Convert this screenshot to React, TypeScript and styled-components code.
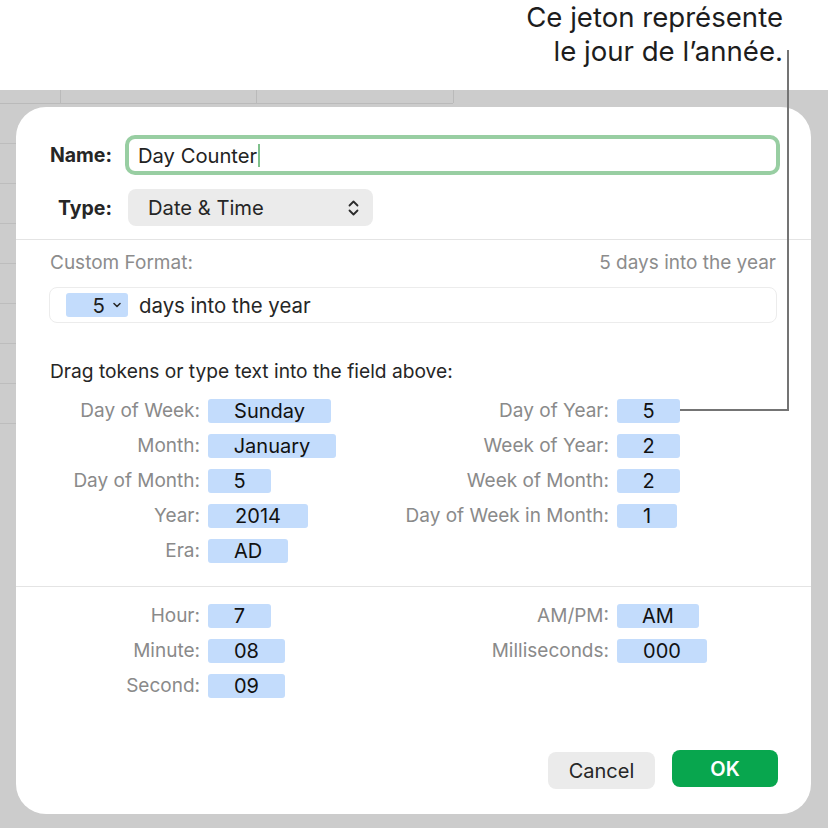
import React from "react";
import styled, { createGlobalStyle } from "styled-components";

const Global = createGlobalStyle`
  html, body { margin: 0; padding: 0; background: #ffffff; }
  body { font-family: Inter, "Noto Sans", "Liberation Sans", sans-serif; -webkit-font-smoothing: antialiased; }
  * { box-sizing: border-box; }
`;

const Page = styled.div`
  position: relative;
  width: 828px;
  height: 830px;
  background: #ffffff;
  overflow: hidden;
`;

const Header = styled.div`
  height: 90px;
  display: flex;
  flex-direction: column;
  align-items: flex-end;
  padding-right: 45px;
`;

const CalloutText = styled.div`
  font-size: 27.6px;
  line-height: 34px;
  color: #1d1d1d;
  text-align: right;
`;

const CalloutLine = styled.div`
  position: absolute;
  left: 680px;
  top: 50px;
  width: 109px;
  height: 361px;
  border-right: 2px solid #747474;
  border-bottom: 2px solid #747474;
  pointer-events: none;
`;

const Stage = styled.div`
  height: 738px;
  padding: 17px 0 0 16px;
  background-color: #cccccc;
  background-image:
    linear-gradient(#bababa, #bababa),
    linear-gradient(#bababa, #bababa),
    linear-gradient(#bababa, #bababa),
    linear-gradient(#bababa, #bababa),
    repeating-linear-gradient(to bottom, transparent 0 39px, #bdbdbd 39px 40px);
  background-size: 453px 1px, 1px 13px, 1px 13px, 1px 13px, 16px 334px;
  background-position: 0 13px, 60px 0, 256px 0, 453px 0, 0 14px;
  background-repeat: no-repeat;
`;

const Dialog = styled.div`
  width: 795px;
  height: 707px;
  background: #ffffff;
  border-radius: 30px;
  display: flex;
  flex-direction: column;
`;

const TopGrid = styled.div`
  display: grid;
  grid-template-columns: 96px 1fr;
  column-gap: 13px;
  row-gap: 14px;
  padding: 28px 31px 0 0;
  align-items: center;
`;

const BoldLabel = styled.div`
  font-size: 19.5px;
  font-weight: 700;
  color: #262626;
  text-align: right;
`;

const NameField = styled.div`
  height: 40px;
  border: 4px solid #98cea2;
  border-radius: 10px;
  display: flex;
  align-items: center;
  padding-left: 9px;
  font-size: 20.2px;
  color: #222;
`;

const Caret = styled.span`
  display: inline-block;
  width: 2px;
  height: 23px;
  background: #7fc18c;
  margin-left: 1px;
`;

const Popup = styled.div`
  margin-left: 3px;
  width: 245px;
  height: 37px;
  background: #ebebeb;
  border-radius: 8px;
  display: flex;
  align-items: center;
  justify-content: space-between;
  padding: 0 14px 0 20px;
  font-size: 20.2px;
  color: #262626;
`;

const Separator = styled.div<{ $top: number }>`
  height: 1px;
  background: #e4e4e4;
  margin-top: ${(p) => p.$top}px;
`;

const Section = styled.div<{ $top: number }>`
  padding: 0 34px 0 33px;
  margin-top: ${(p) => p.$top}px;
`;

const FormatHeader = styled.div`
  display: flex;
  justify-content: space-between;
  padding: 0 1px 0 1px;
  font-size: 19px;
  line-height: 24px;
  color: #8c8c8c;
`;

const FormatField = styled.div`
  margin-top: 12px;
  height: 36px;
  border: 1px solid #ececec;
  border-radius: 8px;
  display: flex;
  align-items: center;
  padding-left: 16px;
  gap: 11px;
  font-size: 20.4px;
  color: #262626;
`;

const MenuToken = styled.div`
  width: 62px;
  height: 24px;
  background: #c3dcfc;
  border-radius: 3px;
  display: flex;
  align-items: center;
  justify-content: flex-end;
  gap: 8px;
  padding-right: 7px;
  color: #1e1e1e;
`;

const Instruction = styled.div`
  margin-top: 36px;
  padding-left: 1px;
  font-size: 19.2px;
  line-height: 24px;
  color: #262626;
`;

const TokenGrid = styled.div<{ $top: number }>`
  display: grid;
  grid-template-columns: 184px 184px 209px 1fr;
  column-gap: 8px;
  row-gap: 11px;
  margin-top: ${(p) => p.$top}px;
`;

const FieldLabel = styled.div`
  font-size: 19px;
  line-height: 24px;
  color: #8a8a8a;
  text-align: right;
  white-space: nowrap;
`;

const Token = styled.div<{ $w: number }>`
  width: ${(p) => p.$w}px;
  height: 24px;
  background: #c3dcfc;
  border-radius: 3px;
  font-size: 20px;
  line-height: 24px;
  color: #111;
  text-align: center;
`;

const Footer = styled.div`
  margin-top: 52px;
  display: flex;
  justify-content: flex-end;
  align-items: flex-start;
  gap: 17px;
  padding-right: 33px;
`;

const Button = styled.div<{ $primary?: boolean }>`
  width: ${(p) => (p.$primary ? 106 : 107)}px;
  height: 37px;
  margin-top: ${(p) => (p.$primary ? 0 : 2)}px;
  border-radius: 8px;
  display: flex;
  align-items: center;
  justify-content: center;
  font-size: 20px;
  font-weight: ${(p) => (p.$primary ? 600 : 400)};
  background: ${(p) => (p.$primary ? "#08a64e" : "#ebebeb")};
  color: ${(p) => (p.$primary ? "#ffffff" : "#262626")};
`;

const UpDown = () => (
  <svg width="11" height="18" viewBox="0 0 11 18" fill="none">
    <path d="M1.5 6.5 L5.5 2.5 L9.5 6.5" stroke="#2a2a2a" strokeWidth="1.8" strokeLinecap="round" strokeLinejoin="round" />
    <path d="M1.5 11.5 L5.5 15.5 L9.5 11.5" stroke="#2a2a2a" strokeWidth="1.8" strokeLinecap="round" strokeLinejoin="round" />
  </svg>
);

const Down = () => (
  <svg width="8" height="6" viewBox="0 0 8 6" fill="none">
    <path d="M1 1.5 L4 4.5 L7 1.5" stroke="#2a2a2a" strokeWidth="1.6" strokeLinecap="round" strokeLinejoin="round" />
  </svg>
);

type Item = { label: string; value: string; w: number } | null;

const dateRows: [Item, Item][] = [
  [{ label: "Day of Week:", value: "Sunday", w: 123 }, { label: "Day of Year:", value: "5", w: 63 }],
  [{ label: "Month:", value: "January", w: 128 }, { label: "Week of Year:", value: "2", w: 63 }],
  [{ label: "Day of Month:", value: "5", w: 63 }, { label: "Week of Month:", value: "2", w: 63 }],
  [{ label: "Year:", value: "2014", w: 100 }, { label: "Day of Week in Month:", value: "1", w: 60 }],
  [{ label: "Era:", value: "AD", w: 80 }, null],
];

const timeRows: [Item, Item][] = [
  [{ label: "Hour:", value: "7", w: 63 }, { label: "AM/PM:", value: "AM", w: 82 }],
  [{ label: "Minute:", value: "08", w: 77 }, { label: "Milliseconds:", value: "000", w: 90 }],
  [{ label: "Second:", value: "09", w: 77 }, null],
];

const Cells = ({ item }: { item: Item }) =>
  item ? (
    <>
      <FieldLabel>{item.label}</FieldLabel>
      <div>
        <Token $w={item.w}>{item.value}</Token>
      </div>
    </>
  ) : (
    <>
      <div />
      <div />
    </>
  );

const Rows = ({ rows, top }: { rows: [Item, Item][]; top: number }) => (
  <TokenGrid $top={top}>
    {rows.map(([a, b], i) => (
      <React.Fragment key={i}>
        <Cells item={a} />
        <Cells item={b} />
      </React.Fragment>
    ))}
  </TokenGrid>
);

export default function App() {
  return (
    <Page>
      <Global />
      <Header>
        <CalloutText>
          Ce jeton représente
          <br />
          le jour de l’année.
        </CalloutText>
      </Header>
      <Stage>
        <Dialog>
          <TopGrid>
            <BoldLabel>Name:</BoldLabel>
            <NameField>
              Day Counter
              <Caret />
            </NameField>
            <BoldLabel>Type:</BoldLabel>
            <Popup>
              <span>Date &amp; Time</span>
              <UpDown />
            </Popup>
          </TopGrid>
          <Separator $top={13} />
          <Section $top={11}>
            <FormatHeader>
              <span>Custom Format:</span>
              <span>5 days into the year</span>
            </FormatHeader>
            <FormatField>
              <MenuToken>
                <span>5</span>
                <Down />
              </MenuToken>
              <span>days into the year</span>
            </FormatField>
            <Instruction>Drag tokens or type text into the field above:</Instruction>
          </Section>
          <Rows rows={dateRows} top={16} />
          <Separator $top={23} />
          <Rows rows={timeRows} top={17} />
          <Footer>
            <Button>Cancel</Button>
            <Button $primary>OK</Button>
          </Footer>
        </Dialog>
      </Stage>
      <CalloutLine />
    </Page>
  );
}
